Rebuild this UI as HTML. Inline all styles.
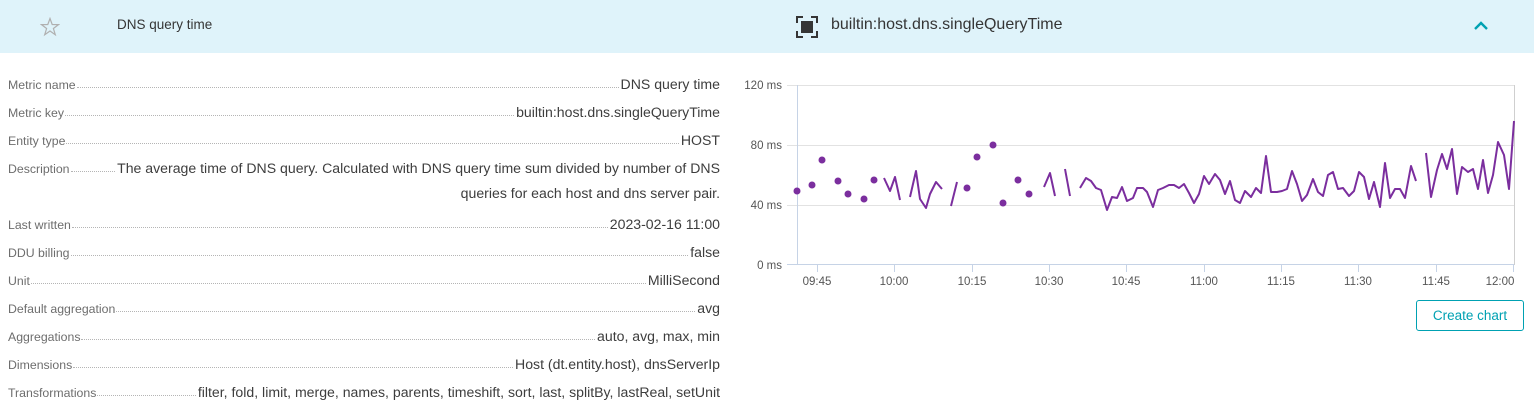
<!DOCTYPE html>
<html><head><style>
body{margin:0;width:1534px;height:417px;overflow:hidden;background:#fff;font-family:"Liberation Sans",sans-serif;position:relative}
.hdr{position:absolute;left:0;top:0;width:1534px;height:53px;background:#dff3fa}
.t{position:absolute;white-space:nowrap}
.row{position:absolute;left:8px;width:712px;height:20px;display:flex;align-items:flex-end}
.row .l{font-size:12.3px;color:#6d6d6d;white-space:nowrap}
.row .d{flex:1;border-bottom:1px dotted #b5b5b5;margin:0 2px 4px 1px}
.row .v{font-size:14.1px;color:#3d3d3d;white-space:nowrap}
</style></head><body>
<div class="hdr"></div>
<svg class="t" style="left:40px;top:17px" width="20" height="20" viewBox="0 0 20 20"><polygon points="10,1.5 12.2,7.5 18.5,7.6 13.4,11.5 15.3,17.7 10,14 4.7,17.7 6.6,11.5 1.5,7.6 7.8,7.5" fill="none" stroke="#b0b0b0" stroke-width="1.2"/></svg>
<div class="t" style="left:117px;top:17px;font-size:13.5px;color:#353535">DNS query time</div>
<svg class="t" style="left:796px;top:16px" width="22" height="22" viewBox="0 0 22 22"><path d="M1 7V1h6M15 1h6v6M21 15v6h-6M7 21H1v-6" fill="none" stroke="#353535" stroke-width="2"/><rect x="5" y="5" width="12" height="12" fill="#353535"/></svg>
<div class="t" style="left:831px;top:16px;font-size:16px;color:#353535">builtin:host.dns.singleQueryTime</div>
<svg class="t" style="left:1473px;top:20px" width="16" height="12" viewBox="0 0 16 12"><path d="M2 9L8 3l6 6" fill="none" stroke="#00a1b2" stroke-width="2.4"/></svg>

<div class="row" style="top:72px"><span class="l">Metric name</span><span class="d"></span><span class="v">DNS query time</span></div>
<div class="row" style="top:100px"><span class="l">Metric key</span><span class="d"></span><span class="v">builtin:host.dns.singleQueryTime</span></div>
<div class="row" style="top:128px"><span class="l">Entity type</span><span class="d"></span><span class="v">HOST</span></div>
<div class="row" style="top:156px"><span class="l">Description</span><span class="d"></span><span class="v">The average time of DNS query. Calculated with DNS query time sum divided by number of DNS</span></div>
<div class="t" style="right:814px;top:185px;font-size:14.1px;color:#3d3d3d">queries for each host and dns server pair.</div>
<div class="row" style="top:212px"><span class="l">Last written</span><span class="d"></span><span class="v">2023-02-16 11:00</span></div>
<div class="row" style="top:240px"><span class="l">DDU billing</span><span class="d"></span><span class="v">false</span></div>
<div class="row" style="top:268px"><span class="l">Unit</span><span class="d"></span><span class="v">MilliSecond</span></div>
<div class="row" style="top:296px"><span class="l">Default aggregation</span><span class="d"></span><span class="v">avg</span></div>
<div class="row" style="top:324px"><span class="l">Aggregations</span><span class="d"></span><span class="v">auto, avg, max, min</span></div>
<div class="row" style="top:352px"><span class="l">Dimensions</span><span class="d"></span><span class="v">Host (dt.entity.host), dnsServerIp</span></div>
<div class="row" style="top:380px"><span class="l">Transformations</span><span class="d"></span><span class="v">filter, fold, limit, merge, names, parents, timeshift, sort, last, splitBy, lastReal, setUnit</span></div>

<svg class="t" style="left:0;top:0" width="1534" height="300">
<g font-family="Liberation Sans" font-size="11.5" fill="#555" text-anchor="end">
<text x="782" y="89">120 ms</text><text x="782" y="149">80 ms</text><text x="782" y="209">40 ms</text><text x="782" y="269">0 ms</text></g>
<g stroke="#e2e2e2" stroke-width="1"><line x1="787" y1="85.5" x2="1514" y2="85.5"/><line x1="787" y1="145.5" x2="1514" y2="145.5"/><line x1="787" y1="205.5" x2="1514" y2="205.5"/></g>
<line x1="1514.5" y1="85" x2="1514.5" y2="265" stroke="#cfcfcf"/>
<line x1="787" y1="264.5" x2="1514" y2="264.5" stroke="#c6d3e6"/>
<line x1="797.5" y1="85" x2="797.5" y2="265" stroke="#c6d3e6"/>
<g stroke="#c6d3e6"><line x1="817.5" y1="265" x2="817.5" y2="272"/><line x1="894.5" y1="265" x2="894.5" y2="272"/><line x1="972.5" y1="265" x2="972.5" y2="272"/><line x1="1049.5" y1="265" x2="1049.5" y2="272"/><line x1="1126.5" y1="265" x2="1126.5" y2="272"/><line x1="1204.5" y1="265" x2="1204.5" y2="272"/><line x1="1281.5" y1="265" x2="1281.5" y2="272"/><line x1="1358.5" y1="265" x2="1358.5" y2="272"/><line x1="1436.5" y1="265" x2="1436.5" y2="272"/><line x1="1513.5" y1="265" x2="1513.5" y2="272"/></g>
<g font-family="Liberation Sans" font-size="11.5" fill="#555" text-anchor="middle">
<text x="817" y="285">09:45</text><text x="894" y="285">10:00</text><text x="972" y="285">10:15</text><text x="1049" y="285">10:30</text><text x="1126" y="285">10:45</text><text x="1204" y="285">11:00</text><text x="1281" y="285">11:15</text><text x="1358" y="285">11:30</text><text x="1436" y="285">11:45</text><text x="1500" y="285">12:00</text></g>
<g fill="#7b2e9e"><circle cx="797" cy="191" r="3.5"/><circle cx="812" cy="185" r="3.5"/><circle cx="822" cy="160" r="3.5"/><circle cx="838" cy="181" r="3.5"/><circle cx="848" cy="194" r="3.5"/><circle cx="864" cy="199" r="3.5"/><circle cx="874" cy="180" r="3.5"/><circle cx="967" cy="188" r="3.5"/><circle cx="977" cy="157" r="3.5"/><circle cx="993" cy="145" r="3.5"/><circle cx="1003" cy="203" r="3.5"/><circle cx="1018" cy="180" r="3.5"/><circle cx="1029" cy="194" r="3.5"/></g>
<g fill="none" stroke="#7b2e9e" stroke-width="2" stroke-linejoin="round">
<polyline points="884,178 890,191 895,177 900,200"/>
<polyline points="910,197 916,171 920,199 926,208 930,194 936,182 942,189"/>
<polyline points="951,206 957,182"/>
<polyline points="1044,187 1050,173 1055,196"/>
<polyline points="1065,169 1070,196"/>
<polyline points="1080,188 1086,178 1091,181 1096,188 1101,190 1107,210 1112,197 1117,198 1122,187 1127,201 1133,198 1137,188 1143,188 1147,192 1153,207 1158,190 1163,188 1169,185 1174,185 1179,188 1184,184 1189,193 1194,203 1199,194 1204,176 1209,184 1215,174 1220,180 1225,194 1230,181 1235,200 1240,203 1245,191 1251,197 1256,188 1261,193 1266,156 1271,192 1277,192 1282,191 1287,189 1292,171 1297,184 1302,201 1307,195 1313,179 1318,192 1323,196 1328,175 1333,172 1338,189 1343,188 1349,196 1354,191 1359,172 1364,177 1369,199 1374,182 1380,207 1385,163 1390,198 1395,189 1400,189 1405,198 1411,166 1416,181"/>
<polyline points="1426,153 1431,197 1437,170 1442,154 1447,169 1452,149 1457,194 1462,167 1468,172 1473,169 1478,189 1483,160 1488,193 1493,175 1498,142 1504,155 1509,189 1514,121"/>
</g></svg>
<div class="t" style="left:1416px;top:300px;width:106px;height:29px;border:1px solid #00a1b2;border-radius:3px;color:#00a1b2;font-size:13.5px;line-height:29px;text-align:center">Create chart</div>
</body></html>
